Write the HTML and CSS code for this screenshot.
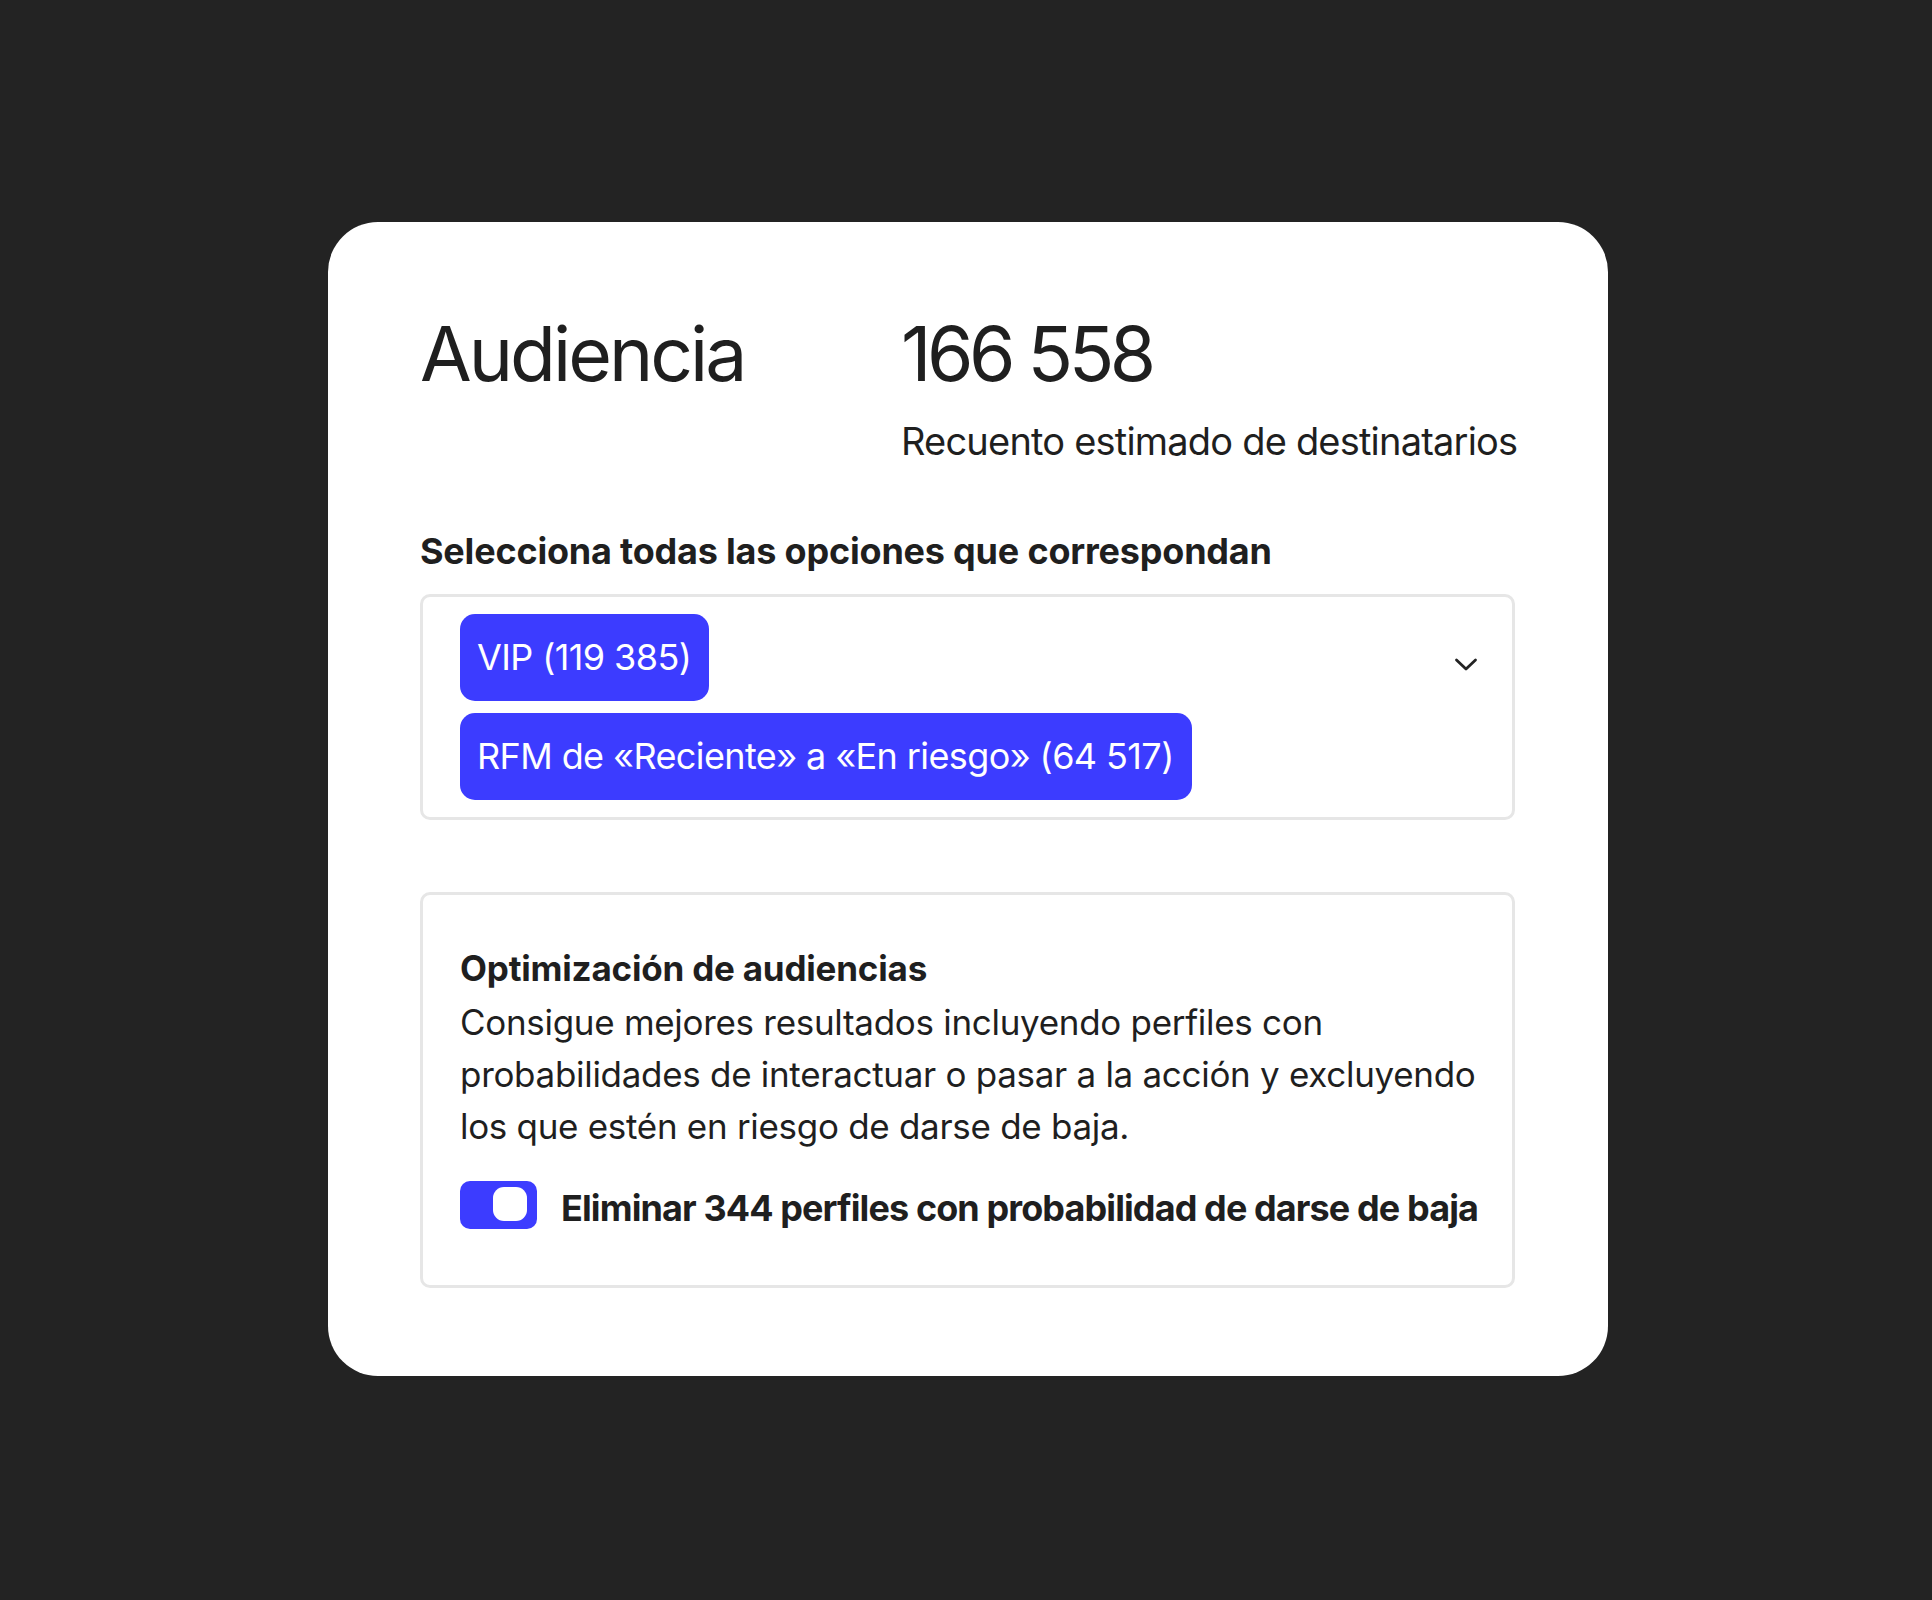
FILE: index.html
```html
<!DOCTYPE html>
<html lang="es">
<head>
<meta charset="utf-8">
<title>Audiencia</title>
<link rel="stylesheet" href="styles.css">
</head>
<body>
<main class="card">
  <header class="head">
    <h1 class="title">Audiencia</h1>
    <div class="count">
      <div class="count-num">166 558</div>
      <div class="count-label">Recuento estimado de destinatarios</div>
    </div>
  </header>
  <section class="select-section">
    <h2 class="select-label">Selecciona todas las opciones que correspondan</h2>
    <div class="select">
      <div class="chips">
        <span class="chip">VIP (119 385)</span>
        <span class="chip">RFM de «Reciente» a «En riesgo» (64 517)</span>
      </div>
      <svg class="chevron" width="24" height="24" viewBox="0 0 24 24" aria-hidden="true">
        <path d="M2.5 7 L12 16 L21.5 7" fill="none" stroke="#232323" stroke-width="2.8" stroke-linecap="round" stroke-linejoin="round"/>
      </svg>
    </div>
  </section>
  <section class="opt">
    <h3 class="opt-title">Optimización de audiencias</h3>
    <p class="opt-text">Consigue mejores resultados incluyendo perfiles con probabilidades de interactuar o pasar a la acción y excluyendo los que estén en riesgo de darse de baja.</p>
    <div class="toggle-row">
      <span class="toggle"><span class="knob"></span></span>
      <span class="toggle-label">Eliminar 344 perfiles con probabilidad de darse de baja</span>
    </div>
  </section>
</main>
</body>
</html>
```
FILE: styles.css
```css
html, body {
  margin: 0;
  padding: 0;
}
body {
  background: #232323;
  font-family: Inter, "Noto Sans", sans-serif;
  color: #1f1f1f;
  width: 1932px;
  height: 1600px;
  padding-top: 222px;
  padding-left: 328px;
  box-sizing: border-box;
}
.card {
  width: 1280px;
  height: 1154px;
  background: #ffffff;
  border-radius: 50px;
  box-sizing: border-box;
  padding: 84px 93px 0 92px;
}
.head {
  display: grid;
  grid-template-columns: 481px 1fr;
}
.title {
  margin: 0;
  font-size: 75px;
  font-weight: 400;
  line-height: 96px;
  letter-spacing: -3px;
}
.count-num {
  font-size: 75px;
  line-height: 96px;
  letter-spacing: -4.5px;
}
.count-label {
  font-size: 38px;
  line-height: 48px;
  margin-top: 15px;
  letter-spacing: -0.8px;
  white-space: nowrap;
}
.select-section {
  margin-top: 63px;
}
.select-label {
  margin: 0 0 20px 0;
  font-size: 36px;
  line-height: 46px;
  font-weight: 700;
  letter-spacing: -0.2px;
}
.select {
  display: flex;
  align-items: flex-start;
  justify-content: space-between;
  border: 3px solid #e6e6e6;
  border-radius: 10px;
  padding: 17px 34px 17px 37px;
}
.chips {
  display: flex;
  flex-direction: column;
  align-items: flex-start;
  gap: 12px;
}
.chip {
  background: #3c3cff;
  color: #ffffff;
  border-radius: 15px;
  font-size: 36px;
  line-height: 87px;
  height: 87px;
  padding: 0 18px 0 17px;
  letter-spacing: -0.6px;
}
.chevron {
  margin-top: 39px;
}
.opt {
  margin-top: 72px;
  border: 3px solid #e6e6e6;
  border-radius: 10px;
  padding: 49px 30px 53px 37px;
}
.opt-title {
  margin: 0;
  font-size: 35px;
  line-height: 48px;
  font-weight: 700;
  letter-spacing: -0.2px;
}
.opt-text {
  margin: 4px 0 0 0;
  font-size: 35px;
  line-height: 52px;
  letter-spacing: -0.3px;
}
.toggle-row {
  display: flex;
  align-items: flex-start;
  gap: 24px;
  margin-top: 29px;
}
.toggle {
  flex: none;
  width: 77px;
  height: 48px;
  background: #3c3cff;
  border-radius: 10px;
  box-sizing: border-box;
  padding: 6px 10px 8px 0;
  display: flex;
  justify-content: flex-end;
}
.knob {
  width: 34px;
  height: 34px;
  background: #ffffff;
  border-radius: 11px;
}
.toggle-label {
  padding-top: 3px;
  white-space: nowrap;
  font-size: 36px;
  line-height: 48px;
  font-weight: 700;
  letter-spacing: -0.9px;
}
```
